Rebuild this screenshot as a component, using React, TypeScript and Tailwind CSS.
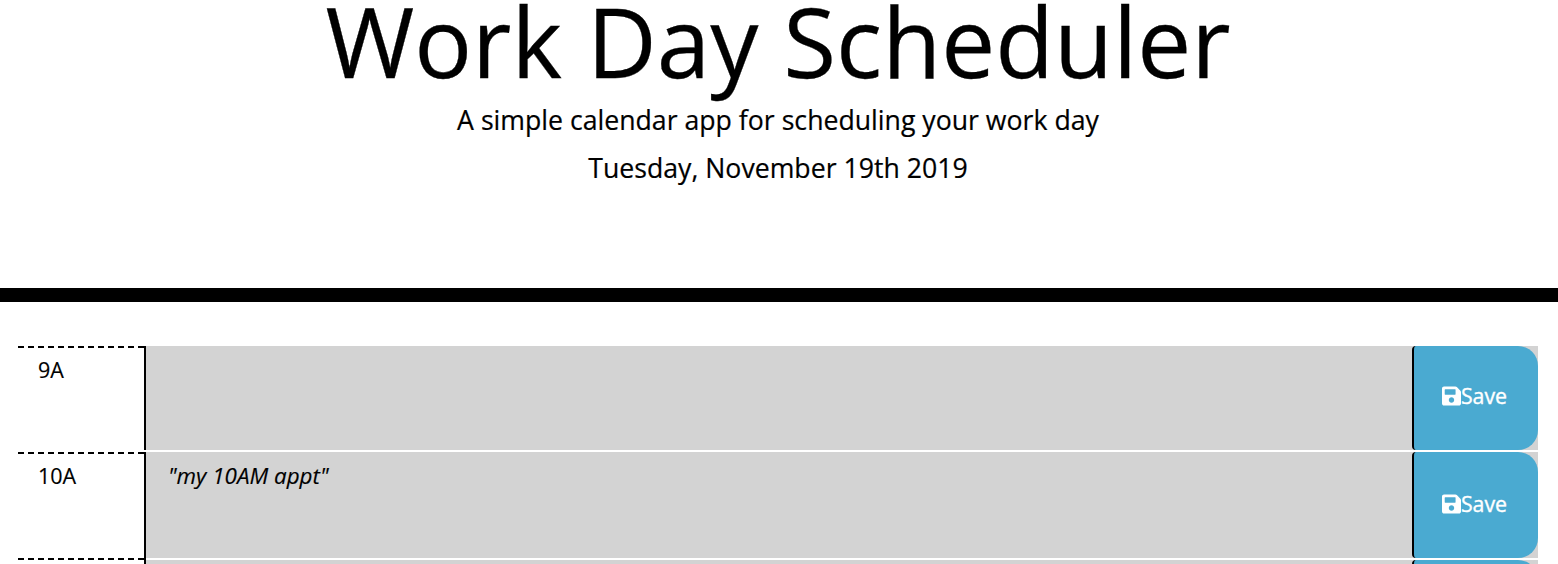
import { FaSave } from "react-icons/fa";

const rows = [
  { hour: "9A", text: "", row: "h-[106px]", cell: "mb-[2px]", textPad: "pt-[9px]", button: "pb-[4px]" },
  { hour: "10A", text: '"my 10AM appt"', row: "h-[106px]", cell: "", textPad: "pt-[9px]", button: "pb-[2px]" },
  { hour: "", text: "", row: "h-[6px]", cell: "pt-[2px]", textPad: "", button: "" },
];

export default function App() {
  return (
    <div className="h-[564px] overflow-hidden bg-white font-['Open_Sans',sans-serif] text-black">
      <header className="flex h-[302px] flex-col items-center border-b-[14px] border-black pr-[2px] text-center">
        <h1 className="h-[102px] text-[96.2px] leading-[82px] [-webkit-text-stroke:0.3px_black]">Work Day Scheduler</h1>
        <p className="h-[36px] text-[26.67px] leading-[36px] [-webkit-text-stroke:0.2px_black]">A simple calendar app for scheduling your work day</p>
        <p className="mt-[12px] h-[36px] text-[26.67px] leading-[36px] [-webkit-text-stroke:0.2px_black]">Tuesday, November 19th 2019</p>
      </header>
      <main className="pl-[18px] pr-[20px] pt-[44px]">
        {rows.map((r, i) => (
          <div key={i} className={`flex ${r.row}`}>
            <div className="w-[126px] border-t-2 border-dashed border-black pl-[20px] pt-[7px] text-[21.5px] leading-[30px] [-webkit-text-stroke:0.15px_black]">{r.hour}</div>
            <div className={`flex flex-1 border-l-2 border-black ${r.cell}`}>
              <div className="flex flex-1 overflow-hidden bg-[#d3d3d3]">
                <div className={`flex-1 pl-[22px] text-[22.4px] italic leading-[30px] [-webkit-text-stroke:0.15px_black] ${r.textPad}`}>{r.text}</div>
                {r.hour ? (
                  <button className={`flex w-[126px] items-center justify-center rounded-l-[4px] rounded-r-[20px] border-l-2 border-black bg-[#4aaad1] pr-[3px] text-[21.33px] text-white [-webkit-text-stroke:0.35px_white] ${r.button}`}>
                    <FaSave className="h-[22px] w-[19px]" />
                    Save
                  </button>
                ) : (
                  <div className="h-[106px] w-[126px] shrink-0 rounded-l-[4px] rounded-r-[20px] border-l-2 border-black bg-[#4aaad1]" />
                )}
              </div>
            </div>
          </div>
        ))}
      </main>
    </div>
  );
}
